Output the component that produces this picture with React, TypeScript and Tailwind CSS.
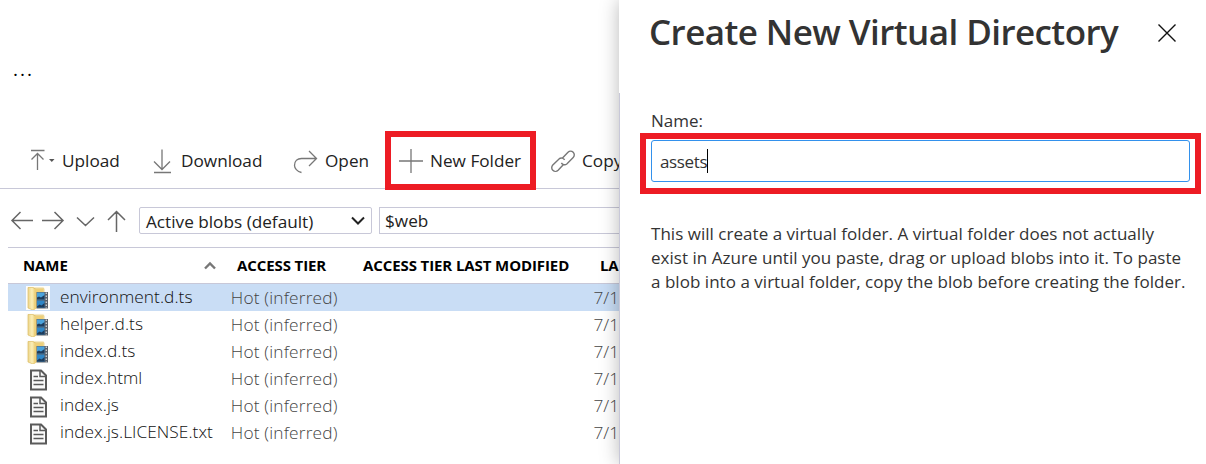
import React from 'react';

function Svg({ w, h, children, className = '' }: { w: number; h: number; children: React.ReactNode; className?: string }) {
  return (
    <svg width={w} height={h} viewBox={`0 0 ${w} ${h}`} fill="none" className={`block shrink-0 ${className}`}>
      {children}
    </svg>
  );
}

function FolderIcon() {
  return (
    <Svg w={24} h={24} className="mr-[10px]">
      <defs>
        <linearGradient id="paper" x1="0" y1="0" x2="1" y2="0">
          <stop offset="0" stopColor="#ecd489" />
          <stop offset="0.5" stopColor="#faeeb8" />
          <stop offset="1" stopColor="#e9c766" />
        </linearGradient>
      </defs>
      <rect width="24" height="24" fill="#fdfdfb" />
      <path d="M7 1.500h10.500l1 1.500v4H7z" fill="#ecd592" />
      <path d="M2 1.500h5l3 2V22l-3 2-5-2z" fill="url(#paper)" stroke="#dcbc63" strokeWidth="0.700" />
      <path d="M9 3h8v4h-6v15l-3 2z" fill="#edd07a" />
      <path d="M10.500 6h11.500v16.500H10.500z" fill="#5a6068" />
      <path d="M11 6.500h7.500v7H11z" fill="#4ba3dc" />
      <path d="M11 14.500h7.500v7H11z" fill="#2f86c6" />
      <path d="M11 11.500l2-1 2 1 3.500-2.500v4.500H11zM11 20.500l2.500-2 2 1 3-2.500v4.500H11z" fill="#1d3c5c" />
      <path d="M20.300 6.500v16" stroke="#c9cdd2" strokeWidth="1.400" strokeDasharray="1.500 1.500" />
    </Svg>
  );
}

function FileIcon() {
  return (
    <Svg w={24} h={24} className="mr-[10px]">
      <path d="M5 3.500h10l5 5v14H5z" fill="#fafafa" stroke="#5a5a5a" strokeWidth="2" />
      <path d="M14 3.500v6h6" stroke="#5a5a5a" strokeWidth="1.500" />
      <path d="M7.500 9.500h4.500M7.500 13.500h10M7.500 17.500h10" stroke="#5a5a5a" strokeWidth="1.400" />
    </Svg>
  );
}

const files = [
  { name: 'environment.d.ts', folder: true, selected: true },
  { name: 'helper.d.ts', folder: true, selected: false },
  { name: 'index.d.ts', folder: true, selected: false },
  { name: 'index.html', folder: false, selected: false },
  { name: 'index.js', folder: false, selected: false },
  { name: 'index.js.LICENSE.txt', folder: false, selected: false },
];

function Toolbar() {
  return (
    <div className="flex h-[55px] shrink-0 items-center border-b border-[#c8c8d8] pl-[29px] text-[17.2px] text-[#222]">
      <Svg w={27} h={26}>
        <path d="M2 2.500h13.500M8.500 22V6M2.500 11.500l6-6 6 6" stroke="#777" strokeWidth="1.300" />
        <path d="M20 11h5.500L22.800 14z" fill="#555" />
      </Svg>
      <span className="w-[96px] shrink-0 pl-[6px]">Upload</span>
      <Svg w={20} h={26}>
        <path d="M10 1.500v20M2 13.500l8 8 8-8M2 24.500h17" stroke="#777" strokeWidth="1.300" />
      </Svg>
      <span className="w-[121px] shrink-0 pl-[9px]">Download</span>
      <Svg w={26} h={26}>
        <path d="M8.500 24.500C4 23.500 1.500 20 1.500 17.500 1.500 13 4.500 10.500 8.500 10.500h15M16 3l7.500 7.500L16 18" stroke="#777" strokeWidth="1.300" />
      </Svg>
      <span className="w-[79px] shrink-0 pl-[6px]">Open</span>
      <Svg w={26} h={26}>
        <path d="M13 1v24M1 13h24" stroke="#777" strokeWidth="1.300" />
      </Svg>
      <span className="w-[127px] shrink-0 pl-[6px]">New Folder</span>
      <Svg w={24} h={24}>
        <path
          d="M11.500 9l5.500-5.800a3.600 3.600 0 0 1 5.200 5.200L15.800 15a3.700 3.700 0 0 1-5.400-1.200M12.500 15.500l-5.400 5.800a3.600 3.600 0 0 1-5.300-5.200L8.300 9.700a3.700 3.700 0 0 1 5.300 1.200"
          stroke="#777"
          strokeWidth="1.400"
        />
      </Svg>
      <span className="pl-[7px]">Copy</span>
    </div>
  );
}

function Explorer() {
  return (
    <main className="flex h-full w-[619px] flex-col overflow-hidden whitespace-nowrap bg-white">
      <div className="h-[134px] shrink-0 pl-[13px] pt-[57px] text-[19px] leading-[24px] tracking-[2px] text-black">...</div>
      <Toolbar />
      <div className="ml-2 flex h-[59px] shrink-0 items-center border-b border-[#c8c8d8] pt-[5px] text-[17.2px] text-[#222]">
        <Svg w={120} h={26}>
          <path
            d="M4 12.500h21M12.500 4L4 12.500l8.500 8.500M34 12.500h21M46.500 4L55 12.500l-8.500 8.500M69 9.500l8.500 8 8.500-8M108.500 24V3.500M100 12l8.500-8.500L117 12"
            stroke="#666"
            strokeWidth="1.500"
          />
        </Svg>
        <div className="ml-[11px] flex h-[27px] w-[233px] items-center justify-between rounded-[2px] border border-[#c8c8d8] pl-[6px] pr-[5px]">
          <span className="pt-[3px]">Active blobs (default)</span>
          <Svg w={16} h={16}>
            <path d="M2 4.500l6 6 6-6" stroke="#222" strokeWidth="2" />
          </Svg>
        </div>
        <div className="ml-[7px] flex h-[27px] flex-1 items-center border border-r-0 border-[#c8c8d8] pl-[5px] pt-px">$web</div>
      </div>
      <div className="ml-2 flex h-[36px] shrink-0 items-center border-b border-[#c8c8d8] pl-[15px] text-[15px] font-bold tracking-[-0.1px] text-black">
        <span className="w-[180px]">NAME</span>
        <Svg w={14} h={10}>
          <path d="M2 7.500l5-5 5 5" stroke="#777" strokeWidth="2.400" />
        </Svg>
        <span className="ml-[20px] w-[126px]">ACCESS TIER</span>
        <span className="w-[237px]">ACCESS TIER LAST MODIFIED</span>
        <span>LA</span>
      </div>
      {files.map((f) => (
        <div
          key={f.name}
          className={
            f.selected
              ? 'ml-2 flex h-[27px] shrink-0 items-center bg-[#c9ddf5] pl-[18px] text-[17.3px]'
              : 'ml-2 flex h-[27px] shrink-0 items-center pl-[18px] text-[17.3px]'
          }
        >
          {f.folder ? <FolderIcon /> : <FileIcon />}
          <span className="w-[171px] pb-[2px] font-light tracking-[0.05px] text-[#111]">{f.name}</span>
          <span className="w-[363px] font-light tracking-[0.18px] text-[#444]">Hot (inferred)</span>
          <span className="font-light text-[#444]">7/1</span>
        </div>
      ))}
    </main>
  );
}

export default function App() {
  return (
    <div className="relative flex h-[464px] w-[1206px] overflow-hidden bg-white font-['Open_Sans',sans-serif]">
      <Explorer />
      <aside className="relative flex w-[587px] bg-white text-[#333] shadow-[0_0_18px_rgba(0,0,0,0.28)]">
        <div className="mt-[93px] w-px shrink-0 bg-[#c8c8d8]" />
        <div className="pl-[31px]">
          <div className="flex items-start">
            <h1 className="-ml-[2px] w-[508px] whitespace-nowrap pt-[7px] text-[35px] font-semibold leading-[50px] tracking-[-0.57px]">
              Create New Virtual Directory
            </h1>
            <Svg w={20} h={20} className="mt-[23px]">
              <path d="M1.500 1.500l17 17M18.500 1.500l-17 17" stroke="#111" strokeWidth="1.400" />
            </Svg>
          </div>
          <label className="mt-[52px] block text-[17px] leading-6">Name:</label>
          <div className="mt-[7px] flex h-[42px] w-[539px] items-center rounded-[3px] border border-[#3391ec] pl-2 text-[17px]">
            <span className="pt-px tracking-[-0.35px]">assets</span>
            <i className="h-6 w-px bg-black" />
          </div>
          <p className="mt-[40px] whitespace-nowrap text-[17px] leading-6 tracking-[0.03px]">
            This will create a virtual folder. A virtual folder does not actually
            <br />
            exist in Azure until you paste, drag or upload blobs into it. To paste
            <br />a blob into a virtual folder, copy the blob before creating the folder.
          </p>
        </div>
      </aside>
      <div className="absolute left-[385px] top-[131px] h-[59px] w-[151px] border-[6px] border-[#ed1c24]" />
      <div className="absolute left-[640px] top-[133px] h-[61px] w-[561px] border-[6px] border-[#ed1c24]" />
    </div>
  );
}
